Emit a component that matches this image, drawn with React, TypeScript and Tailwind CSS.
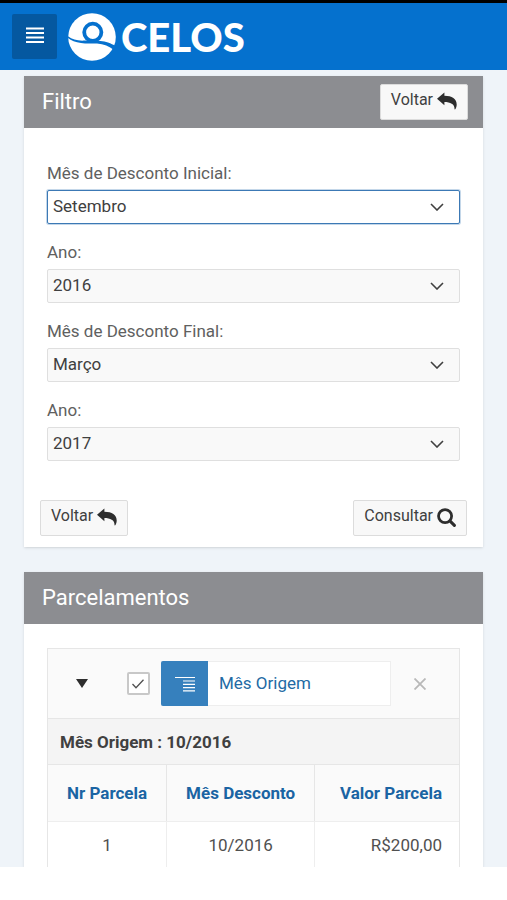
import { useState } from "react";

const MESES = [
  "Janeiro", "Fevereiro", "Março", "Abril", "Maio", "Junho",
  "Julho", "Agosto", "Setembro", "Outubro", "Novembro", "Dezembro",
];
const ANOS = ["2015", "2016", "2017", "2018"];

const parcelas = [{ nr: 1, mes: "10/2016", valor: "R$200,00" }];

function Logo() {
  return (
    <a href="#inicio" className="flex items-center gap-[5px] text-white">
      <svg viewBox="0 0 48 48" className="h-12 w-12" aria-hidden="true">
        <circle cx="24" cy="24" r="23.8" fill="#fff" />
        <circle cx="24.8" cy="19.3" r="8.6" fill="#fff" stroke="#0571ce" strokeWidth="3.8" />
        {/* onda */}
        <path d="M-1 22.500C4 26.800 9 28 17 27.600c9-.3 17-.2 23 1.900 3 1 5 2.200 8 3.500l-2 4c-5-3.800-10-5.800-17-6.400-5-.4-10 .3-16-.6C7 29 2 27-1 24z" fill="#0571ce" />
      </svg>
      <span className="font-[Lato,sans-serif] text-[40px] leading-[48px] font-black">CELOS</span>
    </a>
  );
}

function IconeVoltar() {
  return (
    <svg viewBox="0 0 20 18" className="h-[18px] w-5" fill="#2d2d2d" aria-hidden="true">
      <path d="M0 6.800 7.400 0.400v3.400c7.600 0 12.300 3.200 12.300 8.600 0 1.700-.5 3.400-1.400 4.900-.5.300-.9 0-.8-.5C17.700 12 13.200 9.900 7.400 9.900v3.400z" />
    </svg>
  );
}

function IconeBusca() {
  return (
    <svg viewBox="0 0 20 20" className="h-[19px] w-[19px]" fill="none" stroke="#2d2d2d" aria-hidden="true">
      <circle cx="8.500" cy="8.500" r="6.900" strokeWidth="2.900" />
      <path d="m13.800 13.800 4.500 4.500" strokeWidth="3.200" strokeLinecap="round" />
    </svg>
  );
}

function Botao({ texto, icone }: { texto: string; icone: any }) {
  return (
    <button
      type="button"
      className="flex h-9 items-center gap-1 rounded-xs border border-[#dcdcdc] bg-[#f8f8f8] px-[10px] pb-1 text-base text-[#404040]"
    >
      {texto}
      <span className="pt-[2px]">{icone}</span>
    </button>
  );
}

function Campo({ id, label, inicial, opcoes, ativo = false }: {
  id: string; label: string; inicial: string; opcoes: string[]; ativo?: boolean;
}) {
  const [valor, setValor] = useState(inicial);

  return (
    <div>
      <label htmlFor={id} className="mb-[7px] block text-[17px] leading-5 text-[#606060]">{label}</label>
      <div className="grid items-center">
        <select
          id={id}
          value={valor}
          onChange={(e) => setValor(e.target.value)}
          className={
            "col-start-1 row-start-1 h-[34px] w-full appearance-none rounded-xs border px-[5px] text-[17px] text-[#404040] outline-none " +
            (ativo ? "border-[#3c79b5] bg-white ring-1 ring-[#3c79b5]/30" : "border-[#dfdfdf] bg-[#f9f9f9]")
          }
        >
          {opcoes.map((o) => <option key={o}>{o}</option>)}
        </select>
        <svg viewBox="0 0 14 8" className="pointer-events-none col-start-1 row-start-1 mr-4 h-2 w-[14px] justify-self-end" fill="none" stroke="#404040" strokeWidth="1.600" aria-hidden="true">
          <path d="m1 1 6 6 6-6" />
        </svg>
      </div>
    </div>
  );
}

export default function App() {
  const [agrupado, setAgrupado] = useState(true);

  return (
    <div className="bg-[#eff4f9] font-[Roboto,sans-serif] text-[#404040]">
      {/* Topo */}
      <header className="flex h-[70px] items-center gap-[11px] border-t-3 border-black bg-[#0571ce] px-3">
        <button type="button" aria-label="Menu" className="flex h-[45px] w-[45px] items-center justify-center rounded-xs bg-[#0558a0] pb-1">
          <svg viewBox="0 0 18 16" className="h-4 w-[18px]" stroke="#fff" strokeWidth="2" aria-hidden="true">
            <path d="M0 1.500h18M0 6h18M0 10.500h18M0 15h18" />
          </svg>
        </button>
        <Logo />
      </header>

      <main className="flex flex-col gap-[25px] px-6 pt-[6px]">
        {/* Filtro */}
        <section className="bg-white shadow-sm">
          <div className="flex h-[52px] items-center justify-between bg-[#8c8d91] pr-[15px] pl-[18px]">
            <h2 className="text-[22px] leading-7 text-white">Filtro</h2>
            <Botao texto="Voltar" icone={<IconeVoltar />} />
          </div>
          <form className="flex flex-col gap-[18px] px-[23px] pt-[35px]">
            <Campo id="mes-inicial" label="Mês de Desconto Inicial:" inicial="Setembro" opcoes={MESES} ativo />
            <Campo id="ano-inicial" label="Ano:" inicial="2016" opcoes={ANOS} />
            <Campo id="mes-final" label="Mês de Desconto Final:" inicial="Março" opcoes={MESES} />
            <Campo id="ano-final" label="Ano:" inicial="2017" opcoes={ANOS} />
          </form>
          <div className="flex justify-between px-4 pt-[39px] pb-[11px]">
            <Botao texto="Voltar" icone={<IconeVoltar />} />
            <Botao texto="Consultar" icone={<IconeBusca />} />
          </div>
        </section>

        {/* Parcelamentos */}
        <section className="bg-white shadow-sm">
          <div className="flex h-[52px] items-center bg-[#8c8d91] px-[18px]">
            <h2 className="text-[22px] leading-7 text-white">Parcelamentos</h2>
          </div>
          <div className="px-[23px] pt-6">
            <div className="flex h-[70px] items-center border border-b-0 border-[#e6e6e6] bg-[#fafafa] pr-8 pl-7">
              <button type="button" aria-label="Recolher" className="flex w-3 justify-center">
                <svg viewBox="0 0 12 9" className="h-[9px] w-3" fill="#2d2d2d" aria-hidden="true"><path d="M0 0h12L6 9z" /></svg>
              </button>
              <label className="ml-[38px] grid h-6 w-6 place-items-center">
                <input
                  type="checkbox"
                  aria-label="Mês Origem"
                  checked={agrupado}
                  onChange={(e) => setAgrupado(e.target.checked)}
                  className="col-start-1 row-start-1 h-[23px] w-[23px] appearance-none rounded-xs border-2 border-[#c8c8c8] bg-white"
                />
                {agrupado && (
                  <svg viewBox="0 0 12 10" className="pointer-events-none col-start-1 row-start-1 h-[10px] w-3" fill="none" stroke="#505050" strokeWidth="1.300" aria-hidden="true">
                    <path d="m.500 5 3.500 3.700L11.500.800" />
                  </svg>
                )}
              </label>
              <button type="button" className="ml-[11px] flex h-[45px] grow items-stretch border border-[#eeeeee] bg-white text-left text-[17px] text-[#236aa4]">
                <span className="-my-px -ml-px flex w-[47px] items-center justify-center rounded-l-xs bg-[#3680bd]">
                  <svg viewBox="0 0 20 16" className="h-4 w-5" stroke="#fff" strokeWidth="1.200" aria-hidden="true">
                    <path d="M0 1.500h20M8 5h12M8 8.300h12M8 11.600h12M8 14.900h12" />
                  </svg>
                </span>
                <span className="self-center pl-[11px]">Mês Origem</span>
              </button>
              <button type="button" aria-label="Remover" className="ml-[22px] flex w-[14px] justify-center">
                <svg viewBox="0 0 12 12" className="h-3 w-3" stroke="#b8b8b8" strokeWidth="1.800" aria-hidden="true"><path d="m.500.500 11 11m0-11-11 11" /></svg>
              </button>
            </div>

            <table className="w-full table-fixed border-separate border-spacing-0 border-x border-[#e6e6e6] text-[17px] leading-5">
              <colgroup>
                <col className="w-[29%]" />
                <col className="w-[36%]" />
                <col className="w-[35%]" />
              </colgroup>
              <thead>
                <tr className="h-[46px] bg-[#f4f4f4]">
                  <th colSpan={3} className="border-t border-[#e6e6e6] px-3 text-left font-bold">Mês Origem : 10/2016</th>
                </tr>
                <tr className="h-[57px] bg-[#fafafa] text-[#1a64a3]">
                  <th className="border-t border-r border-[#e6e6e6] font-bold">Nr Parcela</th>
                  <th className="border-t border-r border-[#e6e6e6] font-bold">Mês Desconto</th>
                  <th className="border-t border-[#e6e6e6] pr-[17px] text-right font-bold">Valor Parcela</th>
                </tr>
              </thead>
              <tbody>
                {parcelas.map((p) => (
                  <tr key={p.nr} className="h-[46px] text-[#505050]">
                    <td className="border-t border-r border-[#eeeeee] text-center">{p.nr}</td>
                    <td className="border-t border-r border-[#eeeeee] text-center">{p.mes}</td>
                    <td className="border-t border-[#eeeeee] pr-[17px] text-right">{p.valor}</td>
                  </tr>
                ))}
              </tbody>
            </table>
          </div>
        </section>
      </main>
    </div>
  );
}
